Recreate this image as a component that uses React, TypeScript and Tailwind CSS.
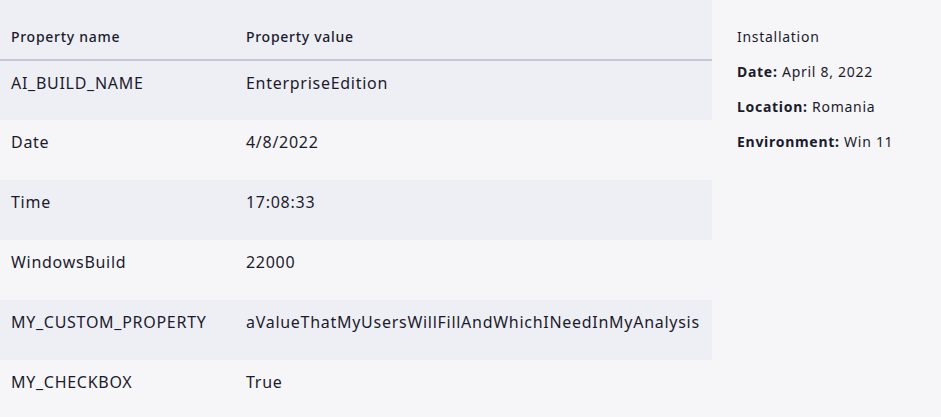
import React from "react";

const rows: [string, string][] = [
  ["AI_BUILD_NAME", "EnterpriseEdition"],
  ["Date", "4/8/2022"],
  ["Time", "17:08:33"],
  ["WindowsBuild", "22000"],
  ["MY_CUSTOM_PROPERTY", "aValueThatMyUsersWillFillAndWhichINeedInMyAnalysis"],
  ["MY_CHECKBOX", "True"],
];

export default function App() {
  return (
    <div
      className="flex w-[941px] h-[417px] overflow-hidden bg-[#f6f6f8] text-[#1c1b2e] tracking-[0.045em]"
      style={{ fontFamily: '"Noto Sans", "Open Sans", sans-serif' }}
    >
      <div className="w-[712px] shrink-0">
        <div className="flex h-[61px] items-end pb-[12px] bg-[#eeeff4] border-b-2 border-[#c7c7d6] text-[14px] leading-[20px] font-medium">
          <div className="w-[246px] pl-[11px]">Property name</div>
          <div>Property value</div>
        </div>
        {rows.map(([k, v], i) => (
          <div
            key={k}
            className={
              "flex items-start text-[16px] leading-[24px] " +
              (i === 0 ? "h-[59px] pt-[10px] " : "h-[60px] pt-[10px] ") +
              (i % 2 === 0 ? "bg-[#eeeff4]" : "bg-[#f6f6f8]")
            }
          >
            <div className="w-[246px] pl-[11px]">{k}</div>
            <div>{v}</div>
          </div>
        ))}
      </div>
      <div className="flex flex-col pl-[25px] pt-[27px] gap-[15px] text-[14px] leading-[20px]">
        <div>Installation</div>
        <div>
          <span className="font-bold">Date:</span> April 8, 2022
        </div>
        <div>
          <span className="font-bold">Location:</span> Romania
        </div>
        <div>
          <span className="font-bold">Environment:</span> Win 11
        </div>
      </div>
    </div>
  );
}
